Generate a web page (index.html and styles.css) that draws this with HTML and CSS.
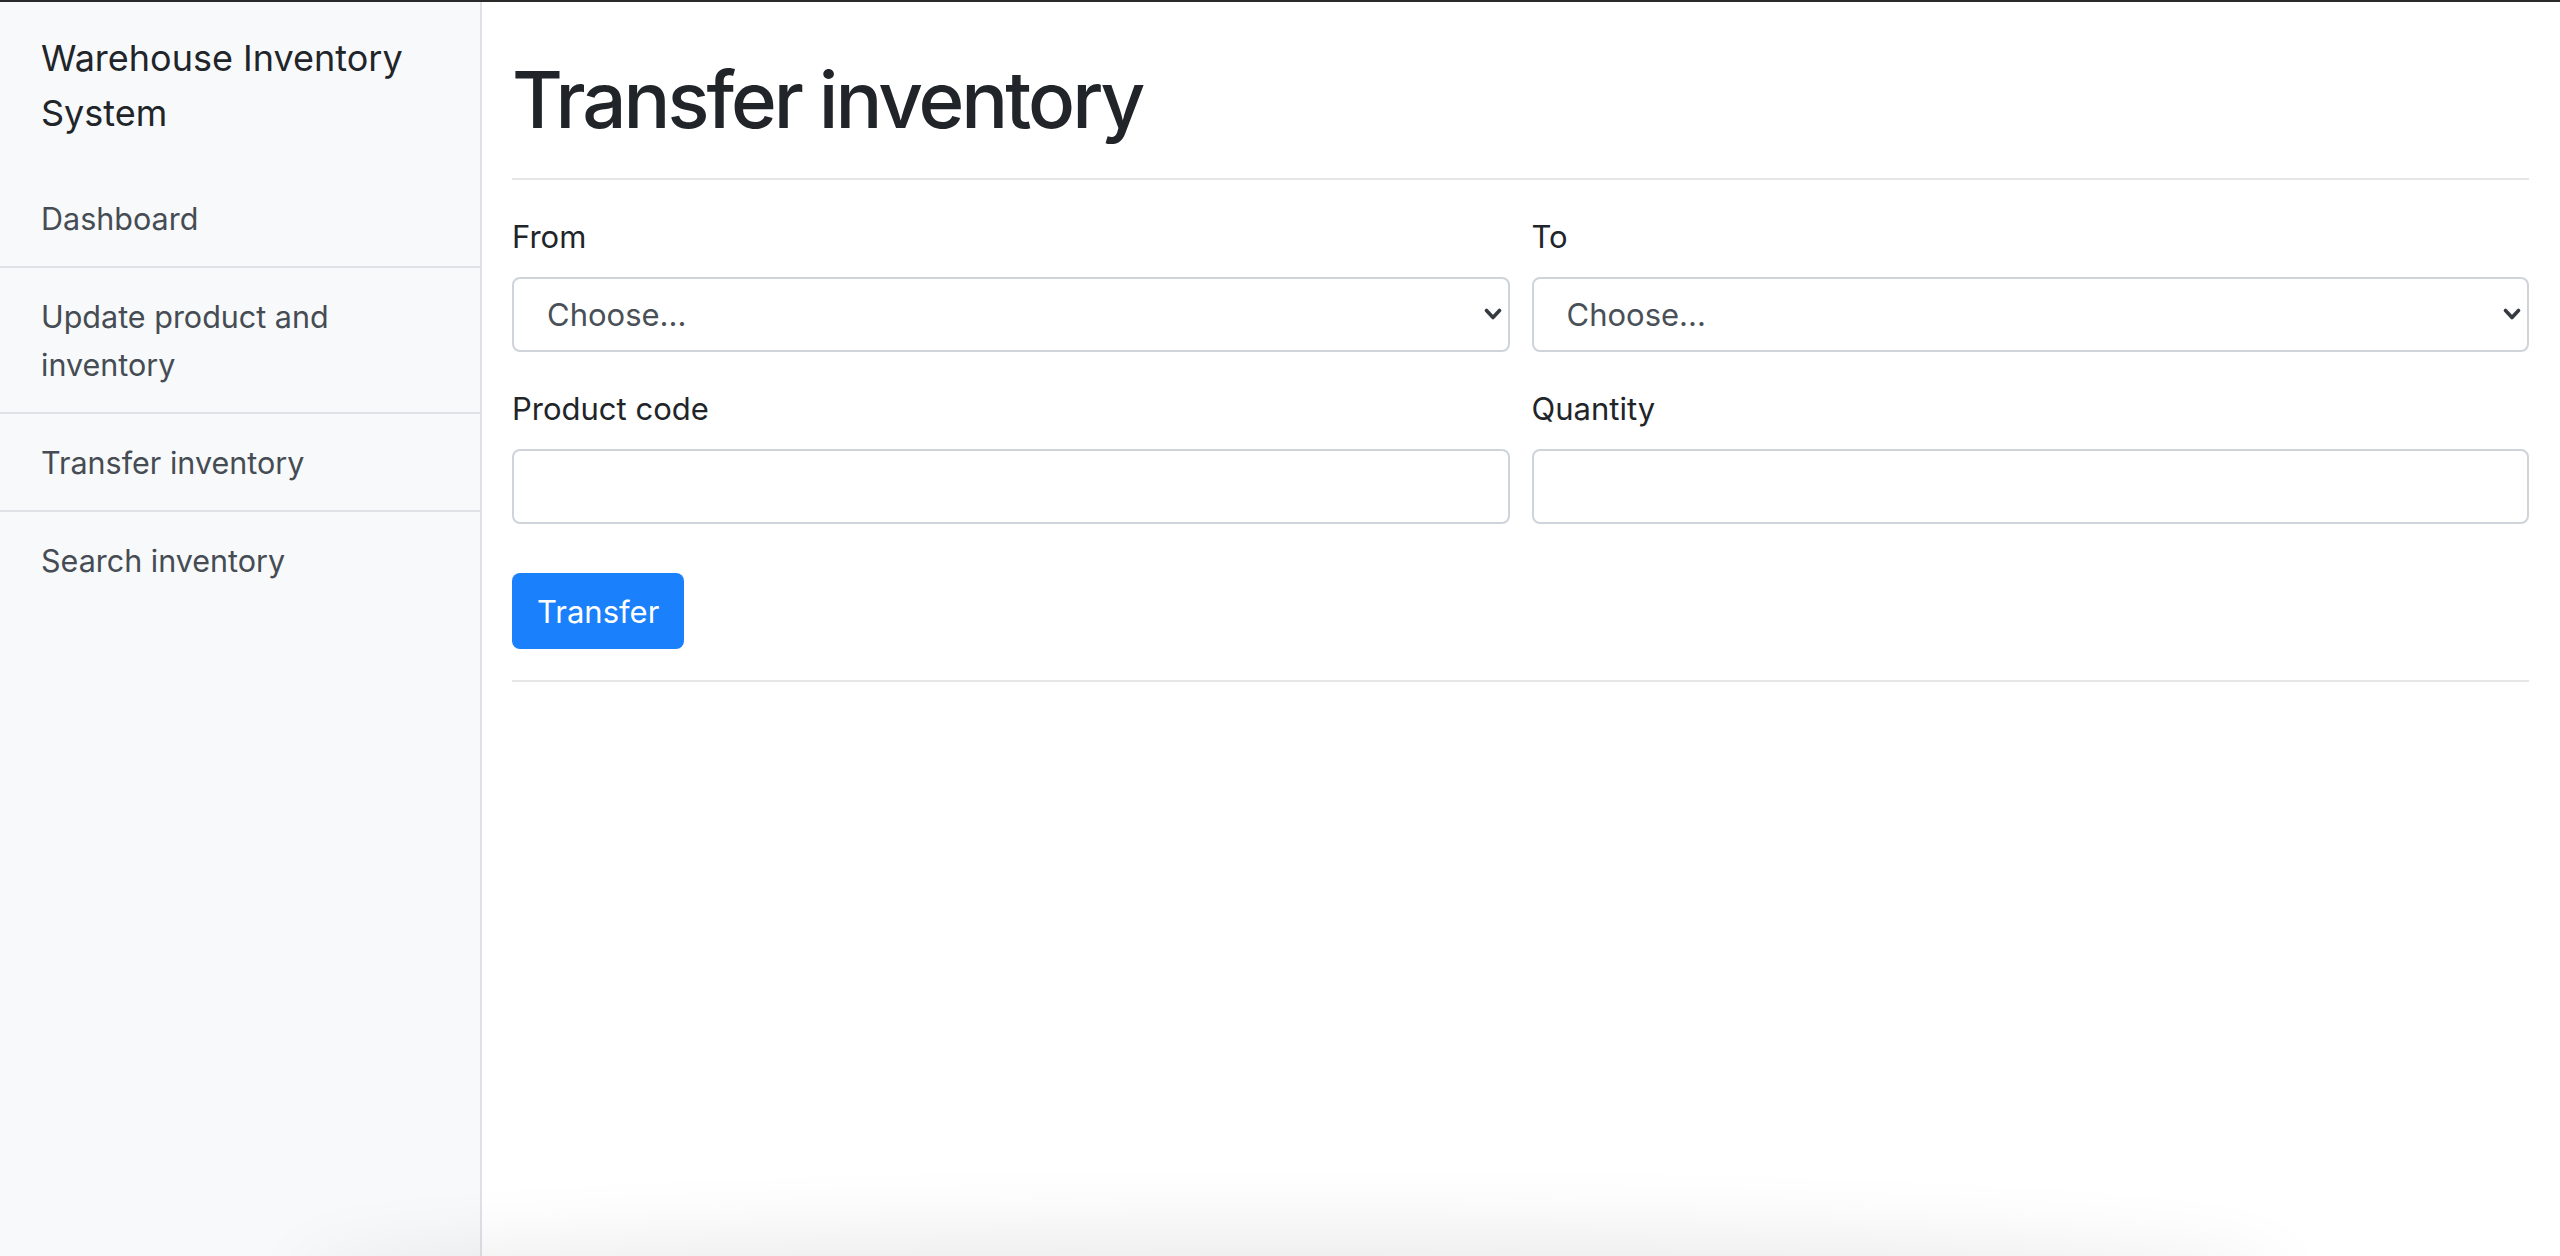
FILE: index.html
```html
<!DOCTYPE html>
<html lang="en">
<head>
<meta charset="utf-8">
<title>Transfer inventory</title>
<link rel="stylesheet" href="styles.css">
</head>
<body>
<div class="app">
  <aside class="sidebar">
    <div class="brand">Warehouse Inventory System</div>
    <nav class="nav">
      <a class="nav-link" href="#">Dashboard</a>
      <a class="nav-link" href="#">Update product and inventory</a>
      <a class="nav-link" href="#">Transfer inventory</a>
      <a class="nav-link" href="#">Search inventory</a>
    </nav>
  </aside>
  <main class="main">
    <h1 class="title">Transfer inventory</h1>
    <hr class="rule">
    <form class="form">
      <div class="form-grid">
        <div class="field">
          <label class="label">From</label>
          <div class="select-wrap">
            <select class="control select"><option>Choose...</option></select>
            <svg class="chev" width="18" height="13" viewBox="0 0 18 13"><polyline points="2.5,2.5 9,9.5 15.5,2.5" fill="none" stroke="#363b41" stroke-width="3.6" stroke-linecap="round" stroke-linejoin="round"/></svg>
          </div>
        </div>
        <div class="field">
          <label class="label">To</label>
          <div class="select-wrap">
            <select class="control select"><option>Choose...</option></select>
            <svg class="chev" width="18" height="13" viewBox="0 0 18 13"><polyline points="2.5,2.5 9,9.5 15.5,2.5" fill="none" stroke="#363b41" stroke-width="3.6" stroke-linecap="round" stroke-linejoin="round"/></svg>
          </div>
        </div>
        <div class="field">
          <label class="label">Product code</label>
          <input class="control" type="text">
        </div>
        <div class="field">
          <label class="label">Quantity</label>
          <input class="control" type="text">
        </div>
      </div>
      <button class="btn" type="button">Transfer</button>
    </form>
    <hr class="rule rule-bottom">
  </main>
  <div class="bottom-shadow"></div>
</div>
</body>
</html>
```

FILE: styles.css
```css
* { box-sizing: border-box; }

html, body {
  margin: 0;
  height: 100%;
  overflow: hidden;
}

body {
  font-family: "Inter", "Liberation Sans", sans-serif;
  color: #212529;
  background: #ffffff;
  border-top: 2px solid #2a2a2a;
}

.app {
  display: flex;
  height: 1254px;
  position: relative;
  overflow: hidden;
}

.sidebar {
  width: 482px;
  flex: 0 0 482px;
  background: #f8f9fa;
  border-right: 2px solid #dee2e6;
}

.brand {
  padding: 29px 41px 0 41px;
  margin-bottom: 29px;
  font-size: 36px;
  line-height: 55px;
  color: #212529;
}

.nav {
  display: flex;
  flex-direction: column;
}

.nav-link {
  display: block;
  padding: 25px 41px 23px 41px;
  font-size: 30.5px;
  line-height: 48px;
  color: #454c53;
  text-decoration: none;
  border-bottom: 2px solid #dee2e6;
}

.nav-link:last-child {
  border-bottom: none;
}

.main {
  flex: 1;
  padding: 51px 31px 0 30px;
}

.title {
  margin: 0;
  font-size: 78px;
  line-height: 94px;
  font-weight: 500;
  letter-spacing: -3px;
  color: #212529;
}

.rule {
  margin: 31px 0 0 0;
  border: 0;
  border-top: 2px solid #e6e6e6;
  height: 0;
}

.form {
  padding-top: 34px;
}

.form-grid {
  display: grid;
  grid-template-columns: 1fr 1fr;
  column-gap: 22px;
  row-gap: 34px;
}

.field {
  display: flex;
  flex-direction: column;
}

.label {
  font-size: 31px;
  line-height: 46px;
  margin-bottom: 17px;
  color: #212529;
}

.select-wrap {
  position: relative;
}

.control {
  display: block;
  width: 100%;
  height: 75px;
  padding: 0 60px 0 33px;
  font-family: "Inter", "Liberation Sans", sans-serif;
  font-size: 31px;
  color: #495057;
  background: #ffffff;
  border: 2px solid #ced4da;
  border-radius: 8px;
  outline: none;
}

.select {
  -webkit-appearance: none;
  appearance: none;
}

.chev {
  position: absolute;
  right: 8px;
  top: 31px;
  pointer-events: none;
}

.btn {
  display: block;
  margin-top: 49px;
  height: 76px;
  padding: 0 25px;
  font-family: "Inter", "Liberation Sans", sans-serif;
  font-size: 31px;
  color: #ffffff;
  background: #1a80fb;
  border: 0;
  border-radius: 8px;
}

.rule-bottom {
  margin-top: 31px;
}

.bottom-shadow {
  position: absolute;
  left: 320px;
  right: 300px;
  bottom: -50px;
  height: 50px;
  border-radius: 50%;
  box-shadow: 0 0 70px 30px rgba(0, 0, 0, 0.075);
  pointer-events: none;
}
```
